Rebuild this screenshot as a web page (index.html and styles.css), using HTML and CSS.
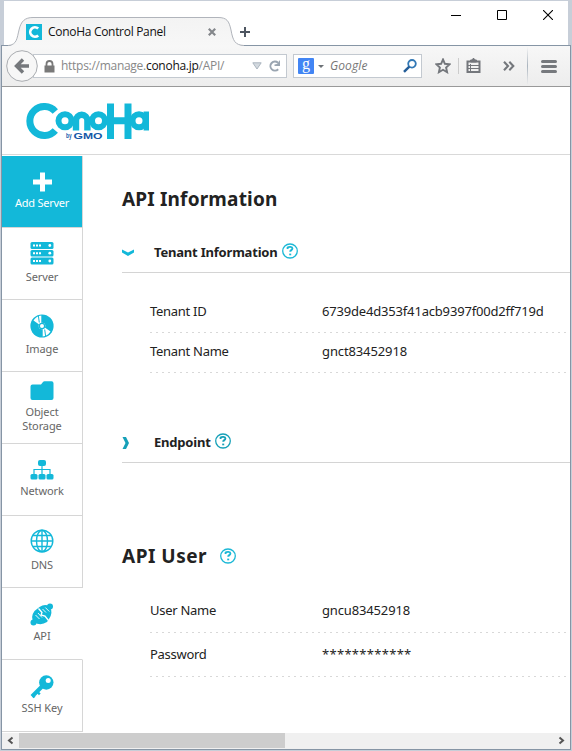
FILE: index.html
```html
<!DOCTYPE html>
<html lang="en">
<head>
<meta charset="utf-8">
<title>ConoHa Control Panel</title>
<link rel="stylesheet" href="styles.css">
</head>
<body>
<svg class="defs" width="0" height="0">
  <symbol id="help" viewBox="0 0 16 16">
    <ellipse cx="8" cy="8" rx="7.3" ry="7" fill="none" stroke="currentColor" stroke-width="1.3"/>
    <path d="M5.6 5.900V4.600c1.3-1.100 4.800-1.100 4.800.9 0 1.700-2.200 1.500-2.200 3.200" fill="none" stroke="currentColor" stroke-width="1.900"/>
    <path d="M7.200 10.600h2v1.700h-2z" fill="currentColor"/>
  </symbol>
</svg>
<div class="window">
  <div class="titlebar">
    <svg class="tab-shape" width="236" height="31" viewBox="0 0 236 31">
      <defs><linearGradient id="tabfill" x1="0" y1="0" x2="0" y2="1"><stop offset="0" stop-color="#f3f3f3"/><stop offset="1" stop-color="#f7f7f7"/></linearGradient></defs>
      <path d="M0 30C10 29 9 22 11 14C13 5 17 1.500 25 1.500H210C219 1.500 221 5 223 14C225 25 227 29 236 29.500V31H0Z" fill="url(#tabfill)"/>
      <path d="M0 29.500C9 29 9 22 11 14C13 5 17 1.500 25 1.500H210C219 1.500 221 5 223 14C225 25 227 29 236 29.500" fill="none" stroke="#b0b4bb"/>
    </svg>
    <div class="tab">
      <svg width="16" height="16" viewBox="0 0 16 16"><path fill="#13b8d9" d="M0 0h16v16H0z"/><path d="M12.200 4.600A4.700 4.700 0 1 0 12.200 11.400" fill="none" stroke="#fff" stroke-width="2.700"/></svg>
      <span class="tab-title">ConoHa Control Panel</span>
      <svg class="tab-close" width="8" height="8" viewBox="0 0 8 8"><path d="M.8.8 7.200 7.200M7.200.8.8 7.200" stroke="#84878b" stroke-width="2.200"/></svg>
      <svg class="tab-new" width="10" height="10" viewBox="0 0 10 10"><path d="M5 0V10M0 5H10" stroke="#4e5661" stroke-width="2"/></svg>
    </div>
    <div class="controls">
      <svg width="10" height="10" viewBox="0 0 10 10"><path d="M0 5.500H10" stroke="#000"/></svg>
      <svg width="10" height="10" viewBox="0 0 10 10"><path d="M.5.500H9.500V9.500H.5z" fill="none" stroke="#000"/></svg>
      <svg width="10" height="10" viewBox="0 0 10 10"><path d="M0 0 10 10M10 0 0 10" stroke="#000" stroke-width="1.100"/></svg>
    </div>
  </div>
  <div class="browser">
    <div class="toolbar">
      <svg class="back" width="32" height="32" viewBox="0 0 32 32"><circle cx="16" cy="16" r="15.300" fill="#f7f7f7" stroke="#a9acb0"/><path d="M17 9.500 10.500 16 17 22.500M11 16H23" fill="none" stroke="#75787c" stroke-width="3.400"/></svg>
      <div class="urlbar">
        <svg width="11" height="13" viewBox="0 0 11 13"><path d="M.5 5.500h10v7H.5z" fill="#797979"/><path d="M2.500 6V4a3 3 0 0 1 6 0v2" fill="none" stroke="#797979" stroke-width="1.800"/></svg>
        <span class="url">https://manage.<b>conoha.jp</b>/API/</span>
        <svg class="drop" width="10" height="8" viewBox="0 0 10 8"><path d="M.8.8H9.200L5 7z" fill="#d3d9df" stroke="#abb5bf"/></svg>
        <svg width="12" height="12" viewBox="0 0 12 12"><path d="M9.200 9.200A4.500 4.500 0 1 1 9 2.800" fill="none" stroke="#9aa5b1" stroke-width="2"/><path d="M11 0V6H5.500V4.500L8 4z" fill="#9aa5b1"/></svg>
      </div>
      <div class="search">
        <span class="g">g</span>
        <svg class="g-drop" width="6" height="3" viewBox="0 0 6 3"><path d="M0 0H6L3 3z" fill="#6c7176"/></svg>
        <span class="placeholder">Google</span>
        <svg width="14" height="14" viewBox="0 0 14 14"><circle cx="9" cy="4.800" r="3.800" fill="#fff" stroke="#3278b5" stroke-width="1.800"/><path d="M6.300 7.700 1 12.800" stroke="#245d98" stroke-width="2.500"/></svg>
      </div>
      <svg class="star" width="16" height="16" viewBox="0 0 16 16"><path d="m8 1.500 1.900 4.300 4.700.5-3.500 3.200 1 4.700L8 11.800l-4.100 2.400 1-4.700L1.400 6.300l4.700-.5z" fill="none" stroke="#74777c" stroke-width="1.900"/></svg>
      <span class="sep"></span>
      <svg class="list" width="15" height="16" viewBox="0 0 15 16"><path d="M1.500 3.500h12v10.500h-12z" fill="none" stroke="#74777c" stroke-width="2"/><path d="M4.500 4V2h1.500l1-1.500h1L9 2h1.500v2zM2 7.500H13M2 10.500H13M4.500 6v7" fill="#74777c" stroke="#74777c" stroke-width="1"/></svg>
      <svg class="more" width="12" height="10" viewBox="0 0 12 10"><path d="M1 .8 5 5 1 9.200M6.300.8 10.300 5 6.300 9.200" fill="none" stroke="#74777c" stroke-width="2.100"/></svg>
      <span class="tall-sep"></span>
      <svg class="menu" width="16" height="13" viewBox="0 0 16 13"><path d="M1.500 1.500h13M1.500 6.500h13M1.500 11.500h13" stroke="#76797d" stroke-width="3" stroke-linecap="round"/></svg>
    </div>
    <header class="header">
      <svg width="124" height="38" viewBox="0 0 124 38" role="img" aria-label="ConoHa by GMO">
        <g fill="none" stroke="#13b8d9" stroke-width="7">
          <path d="M29.300 8.500A14.500 14.500 0 1 0 29.300 27.500"/>
          <circle cx="39" cy="17.700" r="6.500" stroke-width="6"/>
          <path d="M50 27.500V17.500a5.700 5.700 0 0 1 11.400 0v10" stroke-width="6.400"/>
          <circle cx="72.500" cy="17.700" r="6.500" stroke-width="6"/>
          <path d="M84.500.5v35.500M102 .5v35.500M82 17.700h24"/>
          <circle cx="113" cy="17.700" r="6.500" stroke-width="6"/>
          <path d="M120.300 8.500v19" stroke-width="5.400"/>
        </g>
        <g class="logo-sub"><text x="40" y="35" font-size="7" textLength="5.500" lengthAdjust="spacingAndGlyphs">by</text><text x="47.500" y="35.500" font-size="9" textLength="29" lengthAdjust="spacingAndGlyphs">GMO</text></g>
      </svg>
    </header>
    <div class="body">
      <nav class="sidebar">
        <a class="item add"><svg width="20" height="20" viewBox="0 0 20 20"><path d="M10.500 .5v19M1 10h19" stroke="#fff" stroke-width="5"/></svg><span>Add Server</span></a>
        <a class="item server"><svg width="24" height="23" viewBox="0 0 24 23"><g fill="#13b8d9"><rect x=".5" y="0" width="23" height="7" rx="1.500"/><rect x=".5" y="8" width="23" height="6.500" rx="1.500"/><rect x=".5" y="15.500" width="23" height="7" rx="1.500"/></g><path d="M3 3.500h8M3 11.200h8M3 19h8" stroke="#fff" stroke-width="2" stroke-dasharray="2 1"/><g fill="#fff"><circle cx="19.800" cy="3.500" r="1.400"/><circle cx="19.800" cy="11.200" r="1.400"/><circle cx="19.800" cy="19" r="1.400"/></g></svg><span>Server</span></a>
        <a class="item image"><svg width="24" height="24" viewBox="0 0 24 24"><circle cx="12" cy="12" r="11.600" fill="#13b8d9"/><g fill="#fff"><path d="M11.300 1.500v7.500L8.800 10.200 3.500 6.500Q6.500 2 11.300 1.500zM12.700 22.500V15l2.500-1.200 5.300 3.700Q17.500 22 12.700 22.500z"/><circle cx="12" cy="12" r="3.300"/></g><circle cx="12" cy="12" r="2.600" fill="#fff" stroke="#13b8d9" stroke-width="1.200"/><path d="m9.300 8.500-.9-6.500M14.700 15.500l.9 6.500" stroke="#13b8d9"/></svg><span>Image</span></a>
        <a class="item storage"><svg width="24" height="20" viewBox="0 0 24 20"><path d="M2.500 3.500H11L13 1q.5-.7 1.500-.7H21.500q2 0 2 2V17q0 2-2 2h-19q-2 0-2-2V5.500q0-2 2-2z" fill="#13b8d9"/></svg><span>Object<br>Storage</span></a>
        <a class="item network"><svg width="24" height="20" viewBox="0 0 24 20"><g fill="#13b8d9"><rect x="8" y="0" width="8" height="6" rx="2"/><rect x=".5" y="14" width="7" height="5.500" rx="1.500"/><rect x="8.500" y="14" width="7" height="5.500" rx="1.500"/><rect x="16.500" y="14" width="7" height="5.500" rx="1.500"/></g><path d="M12 5v9M4 14V9.500h16V14" fill="none" stroke="#13b8d9" stroke-width="1.200"/></svg><span>Network</span></a>
        <a class="item dns"><svg width="24" height="24" viewBox="0 0 24 24"><g fill="none" stroke="#13b8d9" stroke-width="1.400"><circle cx="12" cy="12" r="10.800"/><ellipse cx="12" cy="12" rx="5.500" ry="10.800"/><path d="M12 1v22M1 12h22M3 6.500h18M3 17.500h18"/></g></svg><span>DNS</span></a>
        <a class="item api"><svg width="24" height="24" viewBox="0 0 24 24"><g fill="#13b8d9"><circle cx="20" cy="3.500" r="3"/><circle cx="3.500" cy="19.500" r="3"/><path d="M9.500 4Q15 .5 19.500 3.500q4 6-.5 12.500L17 19Q11 23 4 19.500 0 14 4.500 8z"/></g><path d="m8.500 5.500 3.500 4-1 2.500 4 1 3.500 4.500" fill="none" stroke="#fff" stroke-width="1.300"/><path d="m12.500 6 3.500 3.500M15.300 4.500l4 4M5.500 12l4 4M8 10l4 4.500" stroke="#fff" stroke-width=".9"/></svg><span>API</span></a>
        <a class="item ssh"><svg width="24" height="24" viewBox="0 0 24 24"><circle cx="16.300" cy="7.500" r="7.200" fill="#13b8d9"/><path d="M12.500 11 2 21.500" stroke="#13b8d9" stroke-width="4"/><path d="m7.500 17 2.300 2.300M3 20.500l1.500 2" stroke="#13b8d9" stroke-width="2.400"/><circle cx="18.200" cy="5.600" r="2.500" fill="#fff"/></svg><span>SSH Key</span></a>
      </nav>
      <main class="content">
        <h1>API Information</h1>
        <section>
          <h2><svg class="chev" width="32" height="8" viewBox="0 0 32 8"><path d="M0 .5 6 3.500 12 .5V3.500L6 7 0 3.500z" fill="#13b8d9"/></svg><span>Tenant Information</span><svg class="help" width="16" height="16"><use href="#help"/></svg></h2>
          <dl class="tenant">
            <div><dt>Tenant ID</dt><dd class="id">6739de4d353f41acb9397f00d2ff719d</dd></div>
            <div><dt>Tenant Name</dt><dd>gnct83452918</dd></div>
          </dl>
        </section>
        <section class="endpoint">
          <h2><svg class="chev" width="32" height="12" viewBox="0 0 32 12"><path d="M.5 0H4L7 6 4 12H.5L3.500 6z" fill="#16a0b8"/></svg><span>Endpoint</span><svg class="help" width="16" height="16"><use href="#help"/></svg></h2>
        </section>
        <h1 class="user-title">API User <svg class="help" width="16" height="16"><use href="#help"/></svg></h1>
        <dl class="user">
          <div><dt>User Name</dt><dd>gncu83452918</dd></div>
          <div><dt>Password</dt><dd class="stars">************</dd></div>
        </dl>
      </main>
    </div>
    <div class="scrollbar">
      <svg width="17" height="15" viewBox="0 0 17 15"><path d="M10.500 4.500 7 7.500l3.500 3" fill="none" stroke="#555" stroke-width="2"/></svg>
      <span class="thumb"></span>
      <svg class="right" width="17" height="15" viewBox="0 0 17 15"><path d="m6.500 4.500 3.500 3-3.500 3" fill="none" stroke="#555" stroke-width="2"/></svg>
    </div>
  </div>
</div>
</body>
</html>
```

FILE: styles.css
```css
* { box-sizing: border-box; }
body { margin: 0; background: #c7ced8; font-family: "Noto Sans", sans-serif; }
svg { display: block; flex: none; }
.defs { position: absolute; }
.window { width: 572px; height: 751px; padding: 1px 1px 1px; overflow: hidden; }
.titlebar { position: relative; height: 44px; margin: 0 3px; background: #fff; display: flex; justify-content: space-between; }
.tab-shape { position: absolute; left: 4px; top: 15px; z-index: 1; }
.tab { position: relative; z-index: 2; display: flex; align-items: center; height: 16px; margin: 23px 0 0 22px; }
.tab-title { width: 120px; margin-left: 6px; font: 12px/16px "Open Sans", sans-serif; white-space: nowrap; color: #111; letter-spacing: -.3px; }
.tab-close { margin-left: 40px; }
.tab-new { margin-left: 24px; }
.controls { display: flex; gap: 36px; margin: 9px 15px 0 0; }
.browser { height: 705px; background: #fff; border: 1px solid #8695a5; display: flex; flex-direction: column; }
.toolbar { flex: none; height: 41px; display: flex; align-items: center; background: linear-gradient(#f7f7f7, #ededed); border-bottom: 1px solid #999; padding-left: 4px; }
.back { position: relative; z-index: 1; }
.urlbar { display: flex; align-items: center; width: 254px; height: 24px; margin-left: -5px; padding-left: 10px; background: #fff; border: 1px solid #c3c9d0; }
.url { width: 188px; margin-left: 6px; font: 12px/20px "Open Sans", sans-serif; letter-spacing: -.28px; color: #888; white-space: nowrap; }
.url b { font-weight: 400; color: #111; }
.drop { margin: 0 7px 0 3px; }
.search { display: flex; align-items: center; width: 129px; height: 24px; margin-left: 6px; padding-left: 4px; background: #fff; border: 1px solid #c3c9d0; }
.g { width: 16px; height: 16px; border-radius: 1px; background: #4285f4; color: #fff; font: 16px/12px "Liberation Serif", serif; text-align: center; }
.g-drop { margin-left: 4px; }
.placeholder { width: 66px; margin-left: 6px; font: italic 12px/18px "Open Sans", sans-serif; letter-spacing: .1px; color: #777; }
.search svg:last-child { margin-left: 7px; }
.star { margin-left: 13px; }
.sep { width: 1px; height: 16px; margin-left: 7px; background: #ccc; }
.list { margin-left: 7px; }
.more { margin-left: 22px; }
.tall-sep { width: 1px; height: 38px; margin-left: 12px; background: linear-gradient(transparent, #aab4be 50%, transparent); }
.menu { margin-left: 13px; }
.header { flex: none; height: 68px; border-bottom: 1px solid #d9d9d9; padding: 16px 0 0 24px; }
.logo-sub { fill: #1458a8; font-family: "Liberation Sans", sans-serif; font-weight: 700; }
.body { flex: none; display: flex; height: 578px; padding-top: 1px; }
.sidebar { width: 81px; }
.item { display: flex; flex-direction: column; align-items: center; width: 81px; height: 72px; border-right: 1px solid #d6d6d6; border-bottom: 1px solid #d6d6d6; font-size: 11px; line-height: 14px; text-align: center; color: #666; white-space: nowrap; }
.item span { margin-top: 4px; letter-spacing: -.1px; }
.item.add { padding-top: 16px; background: #13b8d9; color: #fff; }
.item.add span { letter-spacing: -.25px; }
.server { padding-top: 14px; }
.item.server span { margin-top: 5px; }
.image { padding-top: 14px; }
.storage { padding-top: 9px; }
.network { padding-top: 16px; }
.dns { padding-top: 13px; }
.item.dns span { margin-top: 5px; }
.api { padding-top: 15px; border-right-color: transparent; }
.item.api span { margin-top: 2px; }
.ssh { padding-top: 15px; }
.item.ssh span { margin-top: 2px; }
.content { flex: 1; padding: 31px 0 0 39px; color: #222; }
h1 { display: flex; align-items: center; margin: 0; height: 24px; font-size: 19px; line-height: 24px; font-weight: 700; letter-spacing: .18px; white-space: nowrap; }
h2 { display: flex; align-items: center; margin: 0; height: 41px; border-bottom: 1px solid #d4d4d4; font-size: 13px; line-height: 18px; font-weight: 700; letter-spacing: -.2px; white-space: nowrap; }
h1 + section { margin-top: 21px; }
.chev { margin-top: 2px; }
.help { color: #1bb8d6; margin-left: 4px; margin-bottom: 3px; }
.endpoint .help { color: #16a0b8; }
dl { margin: 0 3px 0 28px; font-size: 13px; line-height: 18px; letter-spacing: -.12px; }
dl div { display: flex; align-items: center; height: 40px; padding-bottom: 4px; background: repeating-linear-gradient(90deg, #d8d8d8 0 2px, transparent 2px 6px) left bottom / 100% 1px no-repeat; }
dt { width: 172px; letter-spacing: -.28px; }
dd { margin: 0; }
.id { letter-spacing: -.18px; }
.tenant { margin-top: 20px; }
.endpoint { margin-top: 49px; }
.user-title { margin-top: 81px; letter-spacing: .5px; }
.user-title .help { margin: 0 0 0 13px; }
.user { margin-top: 21px; }
.user div { height: 44px; padding-bottom: 2px; }
.user dd { letter-spacing: -.15px; }
.user .stars { letter-spacing: .3px; }
.scrollbar { display: flex; height: 16px; background: #f0f0f0; }
.thumb { width: 266px; height: 15px; background: #cdcdcd; }
.right { margin-left: auto; }
```
